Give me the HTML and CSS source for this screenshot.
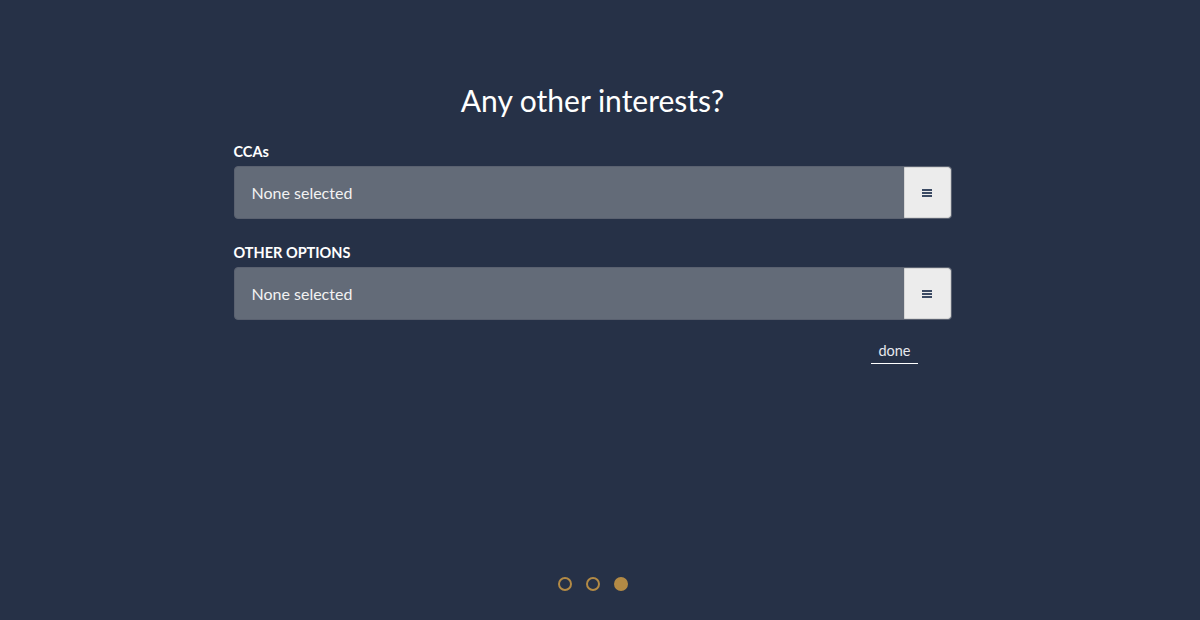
FILE: index.html
```html
<!DOCTYPE html>
<html>
<head>
<meta charset="utf-8">
<link rel="stylesheet" href="styles.css">
</head>
<body>
<div class="page">
  <main class="content">
    <h1 class="title">Any other interests?</h1>
    <div class="group">
      <div class="label">CCAs</div>
      <div class="select">
        <div class="select-text">None selected</div>
        <div class="select-btn"><span class="bars"></span></div>
      </div>
    </div>
    <div class="group">
      <div class="label">OTHER OPTIONS</div>
      <div class="select">
        <div class="select-text">None selected</div>
        <div class="select-btn"><span class="bars"></span></div>
      </div>
    </div>
    <div class="actions"><span class="done">done</span></div>
  </main>
  <nav class="dots">
    <span class="dot"></span>
    <span class="dot"></span>
    <span class="dot active"></span>
  </nav>
</div>
</body>
</html>
```
FILE: styles.css
```css
html, body {
  margin: 0;
  padding: 0;
  height: 100%;
}
body {
  background: #263147;
  font-family: Lato, "Open Sans", sans-serif;
  color: #ffffff;
}
.page {
  height: 620px;
  padding-right: 15px;
  display: flex;
  flex-direction: column;
  align-items: center;
}
.content {
  width: 718px;
  margin-top: 80px;
  display: flex;
  flex-direction: column;
}
.title {
  margin: 0;
  text-align: center;
  font-weight: 400;
  font-size: 30px;
  line-height: 40px;
}
.group {
  margin-top: 23px;
}
.group + .group {
  margin-top: 25px;
}
.label {
  font-weight: 700;
  font-size: 14.5px;
  line-height: 18px;
  margin-bottom: 5px;
}
.select {
  display: flex;
  height: 53px;
  background: #636b78;
  border: 1px solid #5a6170;
  border-radius: 4px;
  overflow: hidden;
  box-sizing: border-box;
}
.select-text {
  flex: 1;
  display: flex;
  align-items: center;
  padding-left: 17px;
  font-size: 16px;
  color: #f2f2f2;
}
.select-btn {
  width: 45px;
  background: #ececec;
  border: 1px solid #d6d6d6;
  border-radius: 0 3px 3px 0;
  display: flex;
  align-items: center;
  justify-content: center;
}
.bars {
  display: block;
  width: 10px;
  height: 8px;
  background: linear-gradient(#3b4a63 0 2px, transparent 2px 3px, #3b4a63 3px 5px, transparent 5px 6px, #3b4a63 6px 8px);
}
.actions {
  display: flex;
  justify-content: flex-end;
  padding-right: 34px;
  margin-top: 20px;
}
.done {
  font-size: 14.5px;
  line-height: 19px;
  color: #e6e8ee;
  border-bottom: 1px solid #ffffff;
  padding: 1px 7px 3px;
}
.dots {
  margin-top: auto;
  margin-bottom: 29px;
  display: flex;
  gap: 14px;
}
.dot {
  width: 14px;
  height: 14px;
  box-sizing: border-box;
  border: 2px solid #b38a45;
  border-radius: 50%;
}
.dot.active {
  background: #b38a45;
}
```
